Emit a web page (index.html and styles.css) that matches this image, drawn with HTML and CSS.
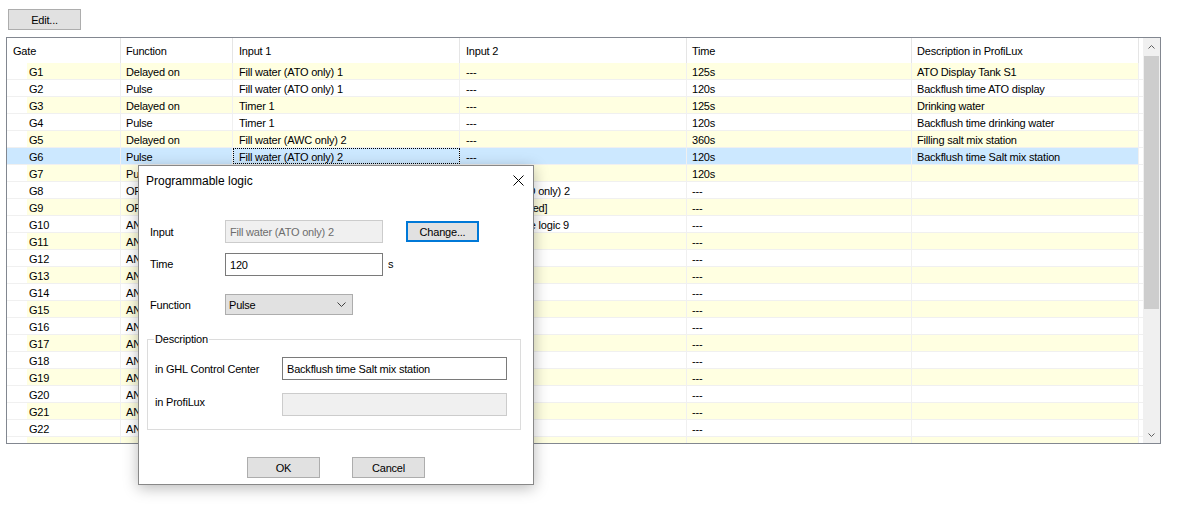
FILE: index.html
```html
<!DOCTYPE html>
<html>
<head>
<meta charset="utf-8">
<link rel="stylesheet" href="styles.css">
</head>
<body>
<div class="page">
  <button class="btn edit-btn">Edit...</button>
  <div class="list">
    <div class="list-main">
      <div class="row header">
        <div class="cell c-gate">Gate</div>
        <div class="cell c-func">Function</div>
        <div class="cell c-in1">Input 1</div>
        <div class="cell c-in2">Input 2</div>
        <div class="cell c-time">Time</div>
        <div class="cell c-desc">Description in ProfiLux</div>
        <div class="cell c-fill"></div>
      </div>
      <div class="row odd"><div class="cell c-gate"><span>G1</span></div><div class="cell c-func">Delayed on</div><div class="cell c-in1">Fill water (ATO only) 1</div><div class="cell c-in2">---</div><div class="cell c-time">125s</div><div class="cell c-desc">ATO Display Tank S1</div><div class="cell c-fill"></div></div>
      <div class="row"><div class="cell c-gate"><span>G2</span></div><div class="cell c-func">Pulse</div><div class="cell c-in1">Fill water (ATO only) 1</div><div class="cell c-in2">---</div><div class="cell c-time">120s</div><div class="cell c-desc">Backflush time ATO display</div><div class="cell c-fill"></div></div>
      <div class="row odd"><div class="cell c-gate"><span>G3</span></div><div class="cell c-func">Delayed on</div><div class="cell c-in1">Timer 1</div><div class="cell c-in2">---</div><div class="cell c-time">125s</div><div class="cell c-desc">Drinking water</div><div class="cell c-fill"></div></div>
      <div class="row"><div class="cell c-gate"><span>G4</span></div><div class="cell c-func">Pulse</div><div class="cell c-in1">Timer 1</div><div class="cell c-in2">---</div><div class="cell c-time">120s</div><div class="cell c-desc">Backflush time drinking water</div><div class="cell c-fill"></div></div>
      <div class="row odd"><div class="cell c-gate"><span>G5</span></div><div class="cell c-func">Delayed on</div><div class="cell c-in1">Fill water (AWC only) 2</div><div class="cell c-in2">---</div><div class="cell c-time">360s</div><div class="cell c-desc">Filling salt mix station</div><div class="cell c-fill"></div></div>
      <div class="row selected"><div class="cell c-gate"><span>G6</span></div><div class="cell c-func">Pulse</div><div class="cell c-in1 focus">Fill water (ATO only) 2</div><div class="cell c-in2">---</div><div class="cell c-time">120s</div><div class="cell c-desc">Backflush time Salt mix station</div><div class="cell c-fill"></div></div>
      <div class="row odd"><div class="cell c-gate"><span>G7</span></div><div class="cell c-func">Pulse</div><div class="cell c-in1">Timer 2</div><div class="cell c-in2">---</div><div class="cell c-time">120s</div><div class="cell c-desc"></div><div class="cell c-fill"></div></div>
      <div class="row"><div class="cell c-gate"><span>G8</span></div><div class="cell c-func">OR</div><div class="cell c-in1">Fill water (ATO only) 1</div><div class="cell c-in2">Fill water (ATO only) 2</div><div class="cell c-time">---</div><div class="cell c-desc"></div><div class="cell c-fill"></div></div>
      <div class="row odd"><div class="cell c-gate"><span>G9</span></div><div class="cell c-func">OR</div><div class="cell c-in1">Timer 1</div><div class="cell c-in2">[Not yet selected]</div><div class="cell c-time">---</div><div class="cell c-desc"></div><div class="cell c-fill"></div></div>
      <div class="row"><div class="cell c-gate"><span>G10</span></div><div class="cell c-func">AND</div><div class="cell c-in1">Programmable logic 8</div><div class="cell c-in2">Programmable logic 9</div><div class="cell c-time">---</div><div class="cell c-desc"></div><div class="cell c-fill"></div></div>
      <div class="row odd"><div class="cell c-gate"><span>G11</span></div><div class="cell c-func">AND</div><div class="cell c-in1">---</div><div class="cell c-in2">---</div><div class="cell c-time">---</div><div class="cell c-desc"></div><div class="cell c-fill"></div></div>
      <div class="row"><div class="cell c-gate"><span>G12</span></div><div class="cell c-func">AND</div><div class="cell c-in1">---</div><div class="cell c-in2">---</div><div class="cell c-time">---</div><div class="cell c-desc"></div><div class="cell c-fill"></div></div>
      <div class="row odd"><div class="cell c-gate"><span>G13</span></div><div class="cell c-func">AND</div><div class="cell c-in1">---</div><div class="cell c-in2">---</div><div class="cell c-time">---</div><div class="cell c-desc"></div><div class="cell c-fill"></div></div>
      <div class="row"><div class="cell c-gate"><span>G14</span></div><div class="cell c-func">AND</div><div class="cell c-in1">---</div><div class="cell c-in2">---</div><div class="cell c-time">---</div><div class="cell c-desc"></div><div class="cell c-fill"></div></div>
      <div class="row odd"><div class="cell c-gate"><span>G15</span></div><div class="cell c-func">AND</div><div class="cell c-in1">---</div><div class="cell c-in2">---</div><div class="cell c-time">---</div><div class="cell c-desc"></div><div class="cell c-fill"></div></div>
      <div class="row"><div class="cell c-gate"><span>G16</span></div><div class="cell c-func">AND</div><div class="cell c-in1">---</div><div class="cell c-in2">---</div><div class="cell c-time">---</div><div class="cell c-desc"></div><div class="cell c-fill"></div></div>
      <div class="row odd"><div class="cell c-gate"><span>G17</span></div><div class="cell c-func">AND</div><div class="cell c-in1">---</div><div class="cell c-in2">---</div><div class="cell c-time">---</div><div class="cell c-desc"></div><div class="cell c-fill"></div></div>
      <div class="row"><div class="cell c-gate"><span>G18</span></div><div class="cell c-func">AND</div><div class="cell c-in1">---</div><div class="cell c-in2">---</div><div class="cell c-time">---</div><div class="cell c-desc"></div><div class="cell c-fill"></div></div>
      <div class="row odd"><div class="cell c-gate"><span>G19</span></div><div class="cell c-func">AND</div><div class="cell c-in1">---</div><div class="cell c-in2">---</div><div class="cell c-time">---</div><div class="cell c-desc"></div><div class="cell c-fill"></div></div>
      <div class="row"><div class="cell c-gate"><span>G20</span></div><div class="cell c-func">AND</div><div class="cell c-in1">---</div><div class="cell c-in2">---</div><div class="cell c-time">---</div><div class="cell c-desc"></div><div class="cell c-fill"></div></div>
      <div class="row odd"><div class="cell c-gate"><span>G21</span></div><div class="cell c-func">AND</div><div class="cell c-in1">---</div><div class="cell c-in2">---</div><div class="cell c-time">---</div><div class="cell c-desc"></div><div class="cell c-fill"></div></div>
      <div class="row"><div class="cell c-gate"><span>G22</span></div><div class="cell c-func">AND</div><div class="cell c-in1">---</div><div class="cell c-in2">---</div><div class="cell c-time">---</div><div class="cell c-desc"></div><div class="cell c-fill"></div></div>
      <div class="row odd"><div class="cell c-gate"><span></span></div><div class="cell c-func"></div><div class="cell c-in1"></div><div class="cell c-in2"></div><div class="cell c-time"></div><div class="cell c-desc"></div><div class="cell c-fill"></div></div>
    </div>
    <div class="scrollbar">
      <div class="sb-arrow">
        <svg width="7" height="4" viewBox="0 0 7 4"><path d="M0.5 3.5 L3.5 0.5 L6.5 3.5" fill="none" stroke="#606060" stroke-width="1"/></svg>
      </div>
      <div class="sb-thumb"></div>
      <div class="sb-track"></div>
      <div class="sb-arrow">
        <svg width="7" height="4" viewBox="0 0 7 4"><path d="M0.5 0.5 L3.5 3.5 L6.5 0.5" fill="none" stroke="#606060" stroke-width="1"/></svg>
      </div>
    </div>
  </div>
</div>

<div class="dialog">
  <div class="dlg-title">
    <span class="dlg-title-text">Programmable logic</span>
    <svg class="dlg-close" width="11" height="11" viewBox="0 0 11 11"><path d="M0.5 0.5 L10.5 10.5 M10.5 0.5 L0.5 10.5" stroke="#000" stroke-width="1" fill="none"/></svg>
  </div>
  <div class="dlg-body">
    <div class="form-row">
      <span class="lbl">Input</span>
      <div class="field disabled">Fill water (ATO only) 2</div>
      <button class="btn change-btn">Change...</button>
    </div>
    <div class="form-row time-row">
      <span class="lbl lbl-up">Time</span>
      <div class="field">120</div>
      <span class="unit">s</span>
    </div>
    <div class="form-row func-row">
      <span class="lbl">Function</span>
      <div class="select">
        <span>Pulse</span>
        <svg width="9" height="5" viewBox="0 0 9 5"><path d="M0.5 0.5 L4.5 4.5 L8.5 0.5" fill="none" stroke="#404040" stroke-width="1"/></svg>
      </div>
    </div>
    <fieldset class="group">
      <legend>Description</legend>
      <div class="form-row">
        <span class="lbl lbl-wide">in GHL Control Center</span>
        <div class="field wide">Backflush time Salt mix station</div>
      </div>
      <div class="form-row profi-row">
        <span class="lbl lbl-wide lbl-up3">in ProfiLux</span>
        <div class="field wide disabled"></div>
      </div>
    </fieldset>
    <div class="dlg-buttons">
      <button class="btn">OK</button>
      <button class="btn">Cancel</button>
    </div>
  </div>
</div>
</body>
</html>
```

FILE: styles.css
```css
* { box-sizing: border-box; }

html, body {
  margin: 0;
  padding: 0;
  background: #ffffff;
}

body {
  font-family: "Liberation Sans", Arial, sans-serif;
  font-size: 11px;
  letter-spacing: -0.2px;
  color: #000;
  width: 1191px;
  height: 528px;
  position: relative;
  overflow: hidden;
}

.page {
  padding: 9px 0 0 6px;
}

.btn {
  font-family: "Liberation Sans", Arial, sans-serif;
  font-size: 11px;
  letter-spacing: -0.2px;
  color: #000;
  width: 73px;
  height: 21px;
  background: #e1e1e1;
  border: 1px solid #adadad;
  padding: 0;
  margin: 0;
  display: flex;
  align-items: center;
  justify-content: center;
}

.edit-btn {
  margin-left: 2px;
}

.list {
  margin-top: 7px;
  width: 1155px;
  height: 407px;
  border: 1px solid #828790;
  display: flex;
  background: #fff;
}

.list-main {
  flex: 1;
  overflow: hidden;
  display: flex;
  flex-direction: column;
}

.row {
  display: flex;
  height: 17px;
  flex: none;
  border-bottom: 1px solid #f0f0f0;
}

.cell {
  height: 100%;
  border-right: 1px solid #f0f0f0;
  padding-left: 5px;
  padding-top: 1px;
  display: flex;
  align-items: center;
  white-space: nowrap;
  overflow: hidden;
  flex: none;
}

.c-gate { width: 114px; padding-left: 20px; padding-top: 0; }
.c-func { width: 112px; }
.c-in1 { width: 227px; padding-left: 6px; }
.c-in2 { width: 227px; padding-left: 6px; }
.c-time { width: 225px; }
.c-desc { width: 227px; }
.c-fill { width: 4px; border-right: none; padding: 0; }

.c-gate span {
  display: flex;
  align-items: center;
  height: 100%;
  width: 100%;
  padding-left: 2px;
  padding-top: 1px;
}

.row.header {
  height: 25px;
  border-bottom: none;
}

.row.header .cell {
  border-right-color: #e5e5e5;
  padding-top: 0;
}

.row.header .c-gate { padding-left: 6px; }
.row.header .c-fill { border-right: none; }

.row.odd .cell:not(.c-gate):not(.c-fill) { background: #ffffe1; }
.row.odd .c-gate span { background: #ffffe1; }

.row.selected .cell:not(.c-fill) { background: #cce8ff; }

.cell.focus {
  outline: 1px dotted #000;
  outline-offset: -1px;
}

.scrollbar {
  width: 17px;
  flex: none;
  background: #f0f0f0;
  display: flex;
  flex-direction: column;
}

.sb-arrow {
  height: 17px;
  flex: none;
  display: flex;
  align-items: center;
  justify-content: center;
}

.sb-thumb {
  height: 253px;
  margin: 1px 1px 0 1px;
  background: #cdcdcd;
  flex: none;
}

.sb-track { flex: 1; }

/* Dialog */
.dialog {
  position: absolute;
  left: 138px;
  top: 165px;
  width: 396px;
  height: 320px;
  background: #fff;
  border: 1px solid #888;
  box-shadow: 0 3px 14px rgba(0, 0, 0, 0.28);
}

.dlg-title {
  height: 30px;
  display: flex;
  align-items: center;
  justify-content: space-between;
  padding-left: 7px;
  padding-right: 9px;
}

.dlg-title-text {
  font-size: 12px;
  letter-spacing: 0;
}

.dlg-close { display: block; margin-top: -2px; }

.dlg-body {
  padding: 24px 11px 0 11px;
}

.form-row {
  display: flex;
  align-items: center;
  height: 23px;
}

.lbl {
  width: 75px;
  flex: none;
}

.lbl-wide { width: 127px; }

.lbl-up { margin-bottom: 2px; }
.lbl-up3 { margin-bottom: 6px; }

.field {
  width: 158px;
  height: 23px;
  border: 1px solid #7a7a7a;
  background: #fff;
  padding-left: 4px;
  display: flex;
  align-items: center;
  flex: none;
}

.field.wide { width: 225px; }

.field.disabled {
  background: #f0f0f0;
  border-color: #cccccc;
  color: #6d6d6d;
}

.change-btn {
  margin-left: 23px;
  border: 2px solid #0078d7;
}

.unit { margin-left: 5px; margin-bottom: 2px; }

.time-row { margin-top: 10px; }
.func-row { margin-top: 18px; height: 21px; }

.select {
  width: 128px;
  height: 21px;
  background: #e1e1e1;
  border: 1px solid #adadad;
  display: flex;
  align-items: center;
  justify-content: space-between;
  padding: 0 6px 0 3px;
}

.group {
  margin: 18px 0 0 -3px;
  width: 374px;
  border: 1px solid #dcdcdc;
  padding: 11px 13px 13px 7px;
  min-width: 0;
}

.group legend {
  padding: 0 1px;
  margin-left: -1px;
  line-height: 13px;
}

.profi-row { margin-top: 13px; }

.dlg-buttons {
  margin-top: 27px;
  display: flex;
  justify-content: center;
  gap: 32px;
}
```
